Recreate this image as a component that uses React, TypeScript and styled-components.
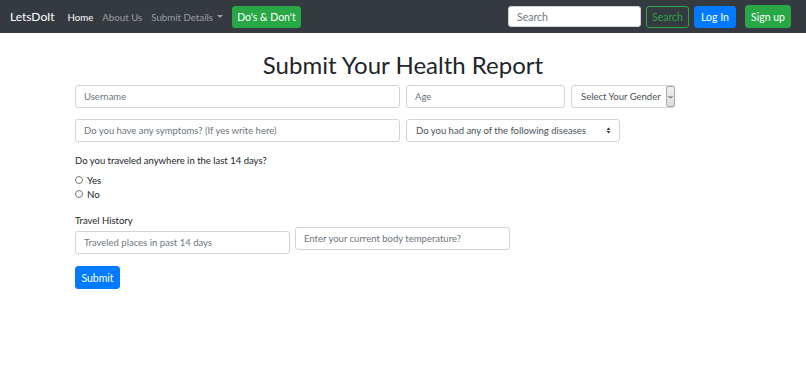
import React from 'react';
import styled, { createGlobalStyle } from 'styled-components';

const GlobalStyle = createGlobalStyle`
  body {
    margin: 0;
    background: #fff;
    font-family: Lato, "Open Sans", sans-serif;
    color: #212529;
  }
  * { box-sizing: border-box; }
`;

const Nav = styled.nav`
  height: 33px;
  background-color: #343a40;
  display: flex;
  align-items: center;
  padding: 0 15px 0 10px;
`;

const Brand = styled.a`
  color: #fff;
  font-size: 12px;
  margin-right: 13px;
`;

const NavLink = styled.a<{ active?: boolean }>`
  color: ${(p) => (p.active ? '#fff' : 'rgba(255,255,255,0.5)')};
  font-size: 9.7px;
  margin-right: 9px;
  display: flex;
  align-items: center;
`;

const Caret = styled.span`
  display: inline-block;
  margin-left: 4px;
  border-top: 3px solid rgba(255,255,255,0.5);
  border-left: 3px solid transparent;
  border-right: 3px solid transparent;
`;

const Spacer = styled.div`
  flex: 1;
`;

const Btn = styled.button<{ variant: 'green' | 'blue' | 'outline'; w: number }>`
  width: ${(p) => p.w}px;
  height: 22px;
  border-radius: 3px;
  font-family: inherit;
  font-size: 10.5px;
  padding: 0;
  cursor: pointer;
  border: 1px solid ${(p) => (p.variant === 'blue' ? '#007bff' : '#28a745')};
  background: ${(p) =>
    p.variant === 'green' ? '#28a745' : p.variant === 'blue' ? '#007bff' : 'transparent'};
  color: ${(p) => (p.variant === 'outline' ? '#28a745' : '#fff')};
`;

const NavGroup = styled.div<{ gap: number }>`
  display: flex;
  align-items: center;
  gap: ${(p) => p.gap}px;
`;

const SearchInput = styled.input`
  width: 133px;
  height: 21px;
  border: 1px solid #ced4da;
  border-radius: 3px;
  padding: 0 8px;
  font-family: inherit;
  font-size: 10.5px;
  &::placeholder { color: #6c757d; }
`;

const Main = styled.main`
  padding: 0 0 0 75px;
`;

const Title = styled.h1`
  font-weight: 400;
  font-size: 24px;
  text-align: center;
  margin: 17px 0 6px -75px;
  line-height: 29px;
`;

const Row = styled.div<{ mb: number }>`
  display: flex;
  align-items: flex-start;
  gap: 6px;
  margin-bottom: ${(p) => p.mb}px;
`;

const Input = styled.input<{ w: number; top?: number }>`
  width: ${(p) => p.w}px;
  height: 23px;
  margin-top: ${(p) => p.top || 0}px;
  border: 1px solid #ced4da;
  border-radius: 3px;
  padding: 0 8px;
  font-family: inherit;
  font-size: 9.5px;
  color: #495057;
  &::placeholder { color: #6c757d; }
`;

const SelectBox = styled.div<{ w: number }>`
  width: ${(p) => p.w}px;
  height: 23px;
  border: 1px solid #ced4da;
  border-radius: 3px;
  display: flex;
  align-items: center;
  font-size: 9.5px;
  color: #495057;
  background: #fff;
`;

const SelectText = styled.span`
  flex: 1;
  padding-left: 9px;
  white-space: nowrap;
`;

const NativeArrow = styled.span`
  width: 9px;
  height: 21px;
  background: linear-gradient(#f0f0f0, #dcdcdc);
  border: 1px solid #a9a9a9;
  border-radius: 2px;
  margin-right: -1px;
  display: flex;
  align-items: center;
  justify-content: center;
`;

const UpDown = styled.span`
  margin-right: 8px;
  display: flex;
  align-items: center;
`;

const Label = styled.div<{ mb: number }>`
  font-size: 9.5px;
  line-height: 13px;
  margin-bottom: ${(p) => p.mb}px;
`;

const RadioRow = styled.label`
  display: flex;
  align-items: center;
  gap: 4px;
  font-size: 9.7px;
  height: 14px;
`;

const Radio = styled.span`
  width: 8px;
  height: 8px;
  border-radius: 50%;
  border: 1px solid #767676;
  background: #fff;
`;

const Submit = styled(Btn)`
  height: 23px;
  margin-top: 12px;
`;

export default function App() {
  return (
    <>
      <GlobalStyle />
      <Nav>
        <Brand>LetsDoIt</Brand>
        <NavLink active>Home</NavLink>
        <NavLink>About Us</NavLink>
        <NavLink>
          Submit Details
          <Caret />
        </NavLink>
        <Btn variant="green" w={69}>
          Do's &amp; Don't
        </Btn>
        <Spacer />
        <NavGroup gap={5}>
          <SearchInput placeholder="Search" />
          <Btn variant="outline" w={43}>Search</Btn>
          <Btn variant="blue" w={42}>Log In</Btn>
        </NavGroup>
        <NavGroup gap={0} style={{ marginLeft: 9 }}>
          <Btn variant="green" w={46} style={{ height: 23 }}>Sign up</Btn>
        </NavGroup>
      </Nav>
      <Main>
        <Title>Submit Your Health Report</Title>
        <Row mb={11}>
          <Input w={325} placeholder="Username" />
          <Input w={159} placeholder="Age" />
          <SelectBox w={104}>
            <SelectText>Select Your Gender</SelectText>
            <NativeArrow>
              <svg width="5" height="4" viewBox="0 0 5 4">
                <path d="M0.5 1 L2.5 3 L4.5 1" stroke="#333" strokeWidth="1" fill="none" />
              </svg>
            </NativeArrow>
          </SelectBox>
        </Row>
        <Row mb={12}>
          <Input w={325} placeholder="Do you have any symptoms? (If yes write here)" />
          <SelectBox w={214}>
            <SelectText>Do you had any of the following diseases</SelectText>
            <UpDown>
              <svg width="5" height="7" viewBox="0 0 5 7">
                <path d="M0.5 3 L2.5 0.5 L4.5 3 Z M0.5 4 L2.5 6.5 L4.5 4 Z" fill="#343a40" />
              </svg>
            </UpDown>
          </SelectBox>
        </Row>
        <Label mb={6}>Do you traveled anywhere in the last 14 days?</Label>
        <RadioRow>
          <Radio />
          Yes
        </RadioRow>
        <RadioRow style={{ marginBottom: 13 }}>
          <Radio />
          No
        </RadioRow>
        <Label mb={0}>Travel History</Label>
        <Row mb={0} style={{ gap: 5 }}>
          <Input w={215} top={4} placeholder="Traveled places in past 14 days" />
          <Input w={215} top={0} placeholder="Enter your current body temperature?" />
        </Row>
        <Submit variant="blue" w={45}>Submit</Submit>
      </Main>
    </>
  );
}
